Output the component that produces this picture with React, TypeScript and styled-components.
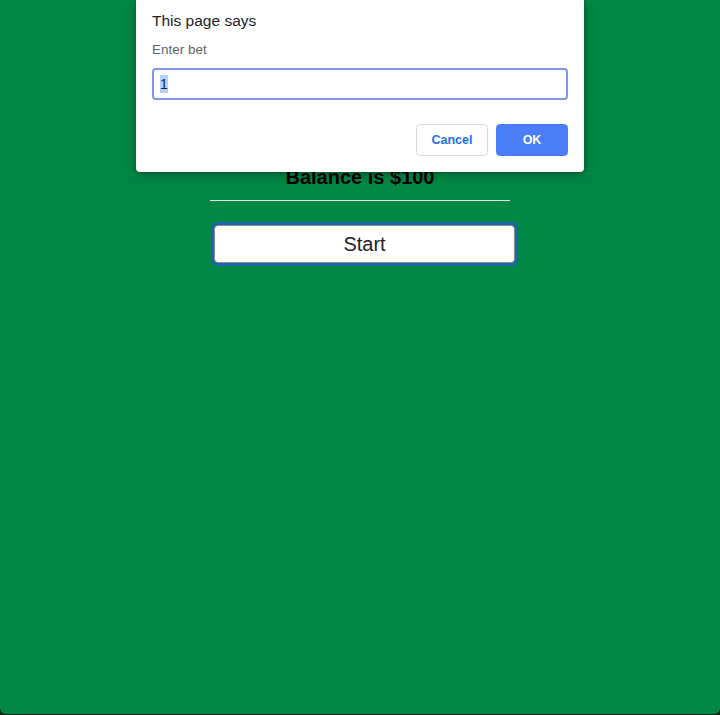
import React from "react";
import styled, { createGlobalStyle } from "styled-components";

const Global = createGlobalStyle`
  html, body { margin: 0; padding: 0; background: #1b1d22; }
  body { font-family: "Liberation Sans", Arial, sans-serif; }
  * { box-sizing: border-box; }
`;

const Page = styled.div`
  position: relative;
  height: 714px;
  background: #008743;
  border-radius: 0 0 6px 6px;
  overflow: hidden;
`;

const Column = styled.main`
  width: 300px;
  margin: 0 auto;
  padding-top: 164px;
  display: flex;
  flex-direction: column;
  align-items: center;
`;

const Balance = styled.h2`
  margin: 0;
  font-size: 20px;
  font-weight: bold;
  color: #000;
  line-height: 26px;
`;

const Rule = styled.hr`
  width: 300px;
  margin: 10px 0 0;
  border: none;
  border-top: 1px solid #e6e6e6;
  height: 0;
`;

const StartButton = styled.button`
  align-self: flex-start;
  margin: 24px 0 0 4px;
  width: 301px;
  height: 38px;
  background: #fff;
  border: 1px solid #8a8a8a;
  border-radius: 4px;
  outline: 3px solid #1f62b0;
  outline-offset: 0;
  font-family: "Liberation Sans", Arial, sans-serif;
  font-size: 20px;
  color: #222;
  cursor: pointer;
`;

const Dialog = styled.div`
  position: absolute;
  top: 0;
  left: 136px;
  width: 448px;
  height: 172px;
  background: #fff;
  border-radius: 0 0 4px 4px;
  box-shadow: 0 2px 12px rgba(0, 0, 0, 0.3), 0 1px 3px rgba(0, 0, 0, 0.2);
  padding: 12px 16px 0;
  display: flex;
  flex-direction: column;
`;

const Title = styled.div`
  font-size: 15.5px;
  color: #202124;
  line-height: 18px;
`;

const Message = styled.div`
  margin-top: 12px;
  font-size: 13.5px;
  color: #5f6368;
  line-height: 16px;
`;

const Field = styled.div`
  margin-top: 10px;
  height: 32px;
  border: 2px solid #7f95e8;
  border-radius: 4px;
  padding: 0 6px;
  display: flex;
  align-items: center;
`;

const Selected = styled.span`
  font-size: 14px;
  color: #202124;
  background: #b2d2fc;
  line-height: 18px;
`;

const Actions = styled.div`
  margin-top: 24px;
  display: flex;
  justify-content: flex-end;
  gap: 8px;
`;

const DialogButton = styled.button<{ $primary?: boolean }>`
  width: 72px;
  height: 32px;
  border-radius: 4px;
  font-family: "Liberation Sans", Arial, sans-serif;
  font-size: 12.5px;
  font-weight: bold;
  background: ${(p) => (p.$primary ? "#4a7df6" : "#fff")};
  color: ${(p) => (p.$primary ? "#fff" : "#1a73e8")};
  border: 1px solid ${(p) => (p.$primary ? "#4a7df6" : "#dadce0")};
`;

export default function App() {
  return (
    <>
      <Global />
      <Page>
        <Column>
          <Balance>Balance is $100</Balance>
          <Rule />
          <StartButton>Start</StartButton>
        </Column>
        <Dialog>
          <Title>This page says</Title>
          <Message>Enter bet</Message>
          <Field>
            <Selected>1</Selected>
          </Field>
          <Actions>
            <DialogButton>Cancel</DialogButton>
            <DialogButton $primary>OK</DialogButton>
          </Actions>
        </Dialog>
      </Page>
    </>
  );
}
